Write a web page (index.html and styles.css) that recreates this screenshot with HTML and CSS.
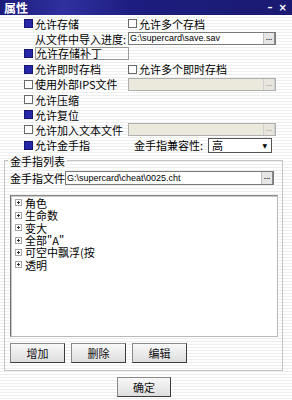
FILE: index.html
```html
<!DOCTYPE html>
<html lang="zh-CN">
<head>
  <meta charset="UTF-8" />
  <title>属性</title>
  <link rel="stylesheet" href="styles.css">
</head>
<body>
  <div class="window">
    <div class="titlebar">
      <span class="title">属性</span>
      <span class="controls"><span class="ctl">&#8211;</span><span class="ctl">&#215;</span></span>
    </div>

    <div class="options">
      <label class="opt"><span class="box on"></span>允许存储</label>
      <label class="opt"><span class="box"></span>允许多个存档</label>

      <span class="sub">从文件中导入进度:</span>
      <div class="field"><span class="val">G:\supercard\save.sav</span><span class="dots">...</span></div>

      <label class="opt"><span class="box on"></span><span class="focus">允许存储补丁</span></label>
      <span></span>

      <label class="opt"><span class="box on"></span>允许即时存档</label>
      <label class="opt"><span class="box"></span>允许多个即时存档</label>

      <label class="opt"><span class="box"></span>使用外部IPS文件</label>
      <div class="field off"><span class="val"></span><span class="dots">...</span></div>

      <label class="opt"><span class="box"></span>允许压缩</label>
      <span></span>

      <label class="opt"><span class="box on"></span>允许复位</label>
      <span></span>

      <label class="opt"><span class="box"></span>允许加入文本文件</label>
      <div class="field off"><span class="val"></span><span class="dots">...</span></div>

      <label class="opt"><span class="box on"></span>允许金手指</label>
      <div class="compat">
        <span>金手指兼容性:</span>
        <div class="select"><span>高</span><span class="arrow">&#9660;</span></div>
      </div>
    </div>

    <fieldset class="group">
      <legend>金手指列表</legend>
      <div class="filerow">
        <span>金手指文件</span>
        <div class="field"><span class="val">G:\supercard\cheat\0025.cht</span><span class="dots">...</span></div>
      </div>

      <div class="tree" id="tree"></div>

      <div class="buttons">
        <button>增加</button>
        <button>删除</button>
        <button>编辑</button>
      </div>
    </fieldset>

    <div class="footer">
      <button>确定</button>
    </div>
  </div>

  <script>
    const cheats = ['角色', '生命数', '变大', '全部"A"', '可空中飘浮(按', '透明'];
    const plus = '<svg class="plus" width="7" height="7" viewBox="0 0 7 7">' +
      '<rect x="0.5" y="0.5" width="6" height="6" fill="#fff" stroke="#a6a6a6"/>' +
      '<path d="M2 3.5h3M3.5 2v3" stroke="#333" stroke-width="1"/></svg>';

    const tree = document.getElementById('tree');
    cheats.forEach(name => {
      const div = document.createElement('div');
      div.className = 'item';
      div.innerHTML = plus + '<span></span>';
      div.lastChild.textContent = name;
      tree.appendChild(div);
    });
  </script>
</body>
</html>
```

FILE: styles.css
```css
body { margin: 0; font-family: "Noto Sans CJK SC", sans-serif; font-size: 11px; color: #000;
  background: repeating-linear-gradient(#fff 0 2px, #eeeeee 2px 3px); }
.window { width: 292px; height: 400px; overflow: hidden; }

.titlebar { height: 15px; display: flex; align-items: center; justify-content: space-between; padding: 0 5px 0 4px; color: #fff;
  background: linear-gradient(to right, #1c1c7c, #3030a0 22%, #1d1d80 45%, #1a1a72); }
.title { font-weight: bold; font-size: 12px; line-height: 15px; }
.controls { display: flex; gap: 6px; font-size: 10px; font-family: "DejaVu Sans", sans-serif; font-weight: bold; }

.options { display: grid; grid-template-columns: 104px 148px; grid-auto-rows: 15.2px; align-items: center; padding: 1px 0 0 24px; }
.opt { display: flex; align-items: center; gap: 2px; white-space: nowrap; line-height: 12px; }
.box { width: 7px; height: 7px; border: 1px solid #6a6a6a; background: #fff; flex: none; }
.box.on { background: #2626a8; border-color: #16166e; }
.sub { padding-left: 11px; white-space: nowrap; line-height: 12px; }
.focus { flex: 1; border: 1px solid #9a9a9a; height: 11px; line-height: 11px; margin-right: -1px; }

.field { display: flex; align-items: stretch; height: 11px; border: 1px solid #7a7a7a; background: #fff; }
.field.off { background: #ebe8dc; border-color: #b0b0b0; }
.val { flex: 1; font-family: "Liberation Sans", sans-serif; font-size: 9px; line-height: 11px; padding-left: 1px; white-space: nowrap; overflow: hidden; }
.dots { width: 10px; background: #e6e6e6; border-left: 1px solid #c0c0c0; border-right: 1px solid #8a8a8a;
  font-family: "Liberation Sans", sans-serif; font-size: 8px; font-weight: bold; line-height: 9px; text-align: center; color: #333; }
.field.off .dots { color: #aaa; background: #e8e6dc; border-color: #d0d0d0; }

.compat { display: flex; align-items: center; gap: 5px; padding-left: 6px; white-space: nowrap; }
.select { box-sizing: border-box; width: 64px; height: 15px; border: 1px solid #555; background: #fff; display: flex; align-items: center; justify-content: space-between; padding: 0 4px 0 3px; }
.arrow { font-size: 6px; font-family: "DejaVu Sans", sans-serif; }

.group { margin: 2px 9px 0 4px; border: 1px solid #c4c4c4; padding: 4px 4px 7px 5px; }
.group legend { padding: 0 2px; margin-left: -2px; line-height: 12px; }
.filerow { display: flex; align-items: center; height: 14px; white-space: nowrap; }
.filerow .field { flex: 1; height: 12px; margin-right: 4px; }
.filerow .val { line-height: 12px; }

.tree { margin-top: 10px; height: 142px; box-sizing: border-box; background: #fff; border: 1px solid #b8b8b8; border-left-color: #707070; border-top-color: #8a8a8a;
  box-shadow: inset 1px 1px 0 #c8c8c8; padding: 1px 0 0 4px; }
.item { display: flex; align-items: center; gap: 3px; height: 12.4px; line-height: 12px; white-space: nowrap; }
.plus { flex: none; }

.buttons { display: flex; gap: 6px; margin-top: 6px; }
button { width: 55px; height: 20px; padding: 0; font-family: "Noto Sans CJK SC", sans-serif; font-size: 11px; color: #111;
  background: linear-gradient(#f8f8f8, #dedede); border: 1px solid; border-color: #8a8a8a #3c3c3c #3c3c3c #8a8a8a; border-radius: 0; }
.footer { padding: 6px 0 0 117px; }
.footer button { width: 54px; }
```
